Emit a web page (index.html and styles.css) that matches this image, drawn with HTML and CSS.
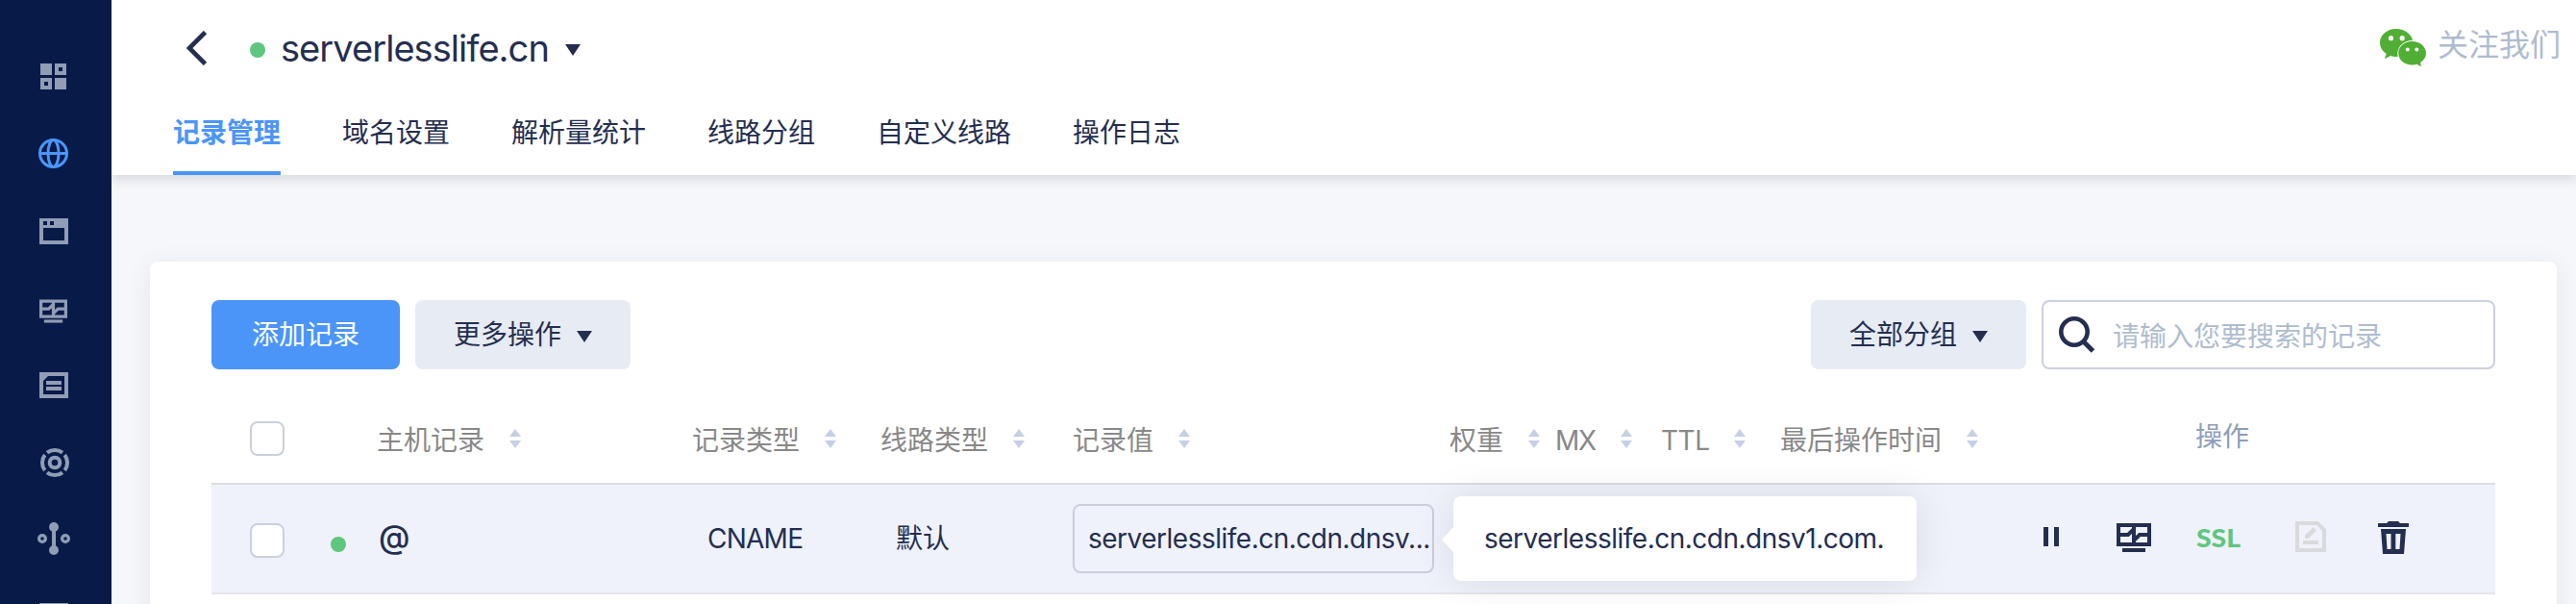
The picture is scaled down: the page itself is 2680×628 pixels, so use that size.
FILE: index.html
```html
<!DOCTYPE html>
<html lang="zh-CN">
<head>
<meta charset="utf-8">
<title>serverlesslife.cn</title>
<link rel="stylesheet" href="styles.css">
</head>
<body>
<svg class="defs" width="0" height="0">
  <symbol id="monitor" viewBox="0 0 36 30">
    <path d="M2 2H34V22H2Z M2 12H12L18 6V18L24 12H34 M18 2V22" fill="none" stroke="currentColor" stroke-width="4"/>
    <path d="M6 26H30V30H6Z" fill="currentColor"/>
  </symbol>
  <symbol id="sort" viewBox="0 0 12 20">
    <path d="M6 0L12 8H0Z M0 12H12L6 20Z" fill="#c5d0e6"/>
  </symbol>
  <symbol id="caret" viewBox="0 0 16 12">
    <path d="M0 0H16L8 12Z" fill="#242e50"/>
  </symbol>
</svg>
<div class="app">
  <nav class="sidebar">
    <a class="nav-item"><svg viewBox="0 0 40 40"><path fill="currentColor" fill-rule="evenodd" d="M4 6H16V18H4Z M19 6H31V18H19Z M23 10V14H27V10Z M4 21H16V33H4Z M8 25V29H12V25Z M19 21H31V33H19Z"/></svg></a>
    <a class="nav-item active"><svg viewBox="0 0 40 40" fill="none" stroke="currentColor" stroke-width="3"><circle cx="17.500" cy="19.500" r="14"/><ellipse cx="17.500" cy="19.500" rx="5.500" ry="14"/><path d="M3.500 19.500H31.500"/></svg></a>
    <a class="nav-item"><svg viewBox="0 0 40 40"><path fill="currentColor" fill-rule="evenodd" d="M3 7H33V34H3Z M7 10V14H11V10Z M14 10V14H18V10Z M7 17V30H29V17Z"/></svg></a>
    <a class="nav-item"><svg viewBox="0 0 40 40"><use href="#monitor" x="3" y="11" width="29" height="25"/></svg></a>
    <a class="nav-item"><svg viewBox="0 0 40 40"><path fill="currentColor" fill-rule="evenodd" d="M3 7H33V34H3Z M12 11L7 16V30H29V11Z M10 16H26V20H10Z M10 22H26V26H10Z"/></svg></a>
    <a class="nav-item"><svg viewBox="0 0 40 40" fill="none" stroke="currentColor" stroke-width="4"><circle cx="19" cy="21" r="5.300"/><path d="M11 10.700A13 13 0 0 1 27 10.700 M29.300 13A13 13 0 0 1 29.300 29 M27 31.300A13 13 0 0 1 11 31.300 M8.700 29A13 13 0 0 1 8.700 13"/></svg></a>
    <a class="nav-item"><svg viewBox="0 0 40 40"><path d="M18 8V32" stroke="currentColor" stroke-width="4"/><circle cx="18" cy="8" r="5" fill="currentColor"/><circle cx="18" cy="32" r="5" fill="currentColor"/><g fill="none" stroke="currentColor" stroke-width="3.200"><circle cx="6" cy="20" r="3.400"/><circle cx="30" cy="20" r="3.400"/></g></svg></a>
    <a class="nav-item"><svg viewBox="0 0 40 40"><path fill="currentColor" d="M3 7H33V34H3Z"/></svg></a>
  </nav>
  <div class="main">
    <header class="header">
      <div class="title-bar">
        <svg class="back" viewBox="0 0 22 36" width="22" height="36"><path d="M19.500 1.500L3 18L19.500 34.500" fill="none" stroke="#242e50" stroke-width="4.600"/></svg>
        <span class="dot"></span>
        <h1 class="domain">serverlesslife.cn</h1>
        <svg class="caret" width="16" height="12"><use href="#caret"/></svg>
        <div class="follow">
          <svg width="48" height="40" viewBox="0 0 48 40">
            <path fill="#4fae33" d="M17 0C7.500 0 0 6.300 0 14.200C0 19 2.500 23 6.700 25.800L5 31.200L11 28C13 28.600 15 29 18.500 29C17 19 24 12 34 12C32.500 5 25.500 0 17 0Z"/>
            <path fill="#4fae33" d="M33.500 13C25.500 13 19.200 18.500 19.200 25.200C19.200 32 25.500 37.500 33.500 37.500C35.500 37.500 37 37.200 38.500 36.700L43 39.200L42 35C45.700 32.700 48 29.200 48 25.200C48 18.500 41.500 13 33.500 13Z"/>
            <circle cx="11.500" cy="9.700" r="2.600" fill="#fff"/><circle cx="23.200" cy="9.700" r="2.600" fill="#fff"/><circle cx="28.800" cy="21.500" r="2" fill="#fff"/><circle cx="38.300" cy="21.500" r="2" fill="#fff"/>
          </svg>
          <span>关注我们</span>
        </div>
      </div>
      <div class="tabs">
        <a class="tab selected">记录管理</a>
        <a class="tab">域名设置</a>
        <a class="tab">解析量统计</a>
        <a class="tab">线路分组</a>
        <a class="tab">自定义线路</a>
        <a class="tab">操作日志</a>
      </div>
    </header>
    <section class="card">
      <div class="toolbar">
        <button class="btn primary">添加记录</button>
        <button class="btn">更多操作<svg width="16" height="12"><use href="#caret"/></svg></button>
        <button class="btn group">全部分组<svg width="16" height="12"><use href="#caret"/></svg></button>
        <div class="search">
          <svg width="38" height="38" viewBox="0 0 38 38" fill="none" stroke="#242e50"><circle cx="16" cy="16" r="13.700" stroke-width="4.600"/><path d="M25.500 26L35.500 36" stroke-width="5"/></svg>
          <span>请输入您要搜索的记录</span>
        </div>
      </div>
      <div class="row head">
        <div class="check"><span class="box"></span></div>
        <div class="cell">主机记录<svg><use href="#sort"/></svg></div>
        <div class="cell">记录类型<svg><use href="#sort"/></svg></div>
        <div class="cell">线路类型<svg><use href="#sort"/></svg></div>
        <div class="cell">记录值<svg><use href="#sort"/></svg></div>
        <div class="cell">权重<svg><use href="#sort"/></svg></div>
        <div class="cell mx">MX<svg><use href="#sort"/></svg></div>
        <div class="cell ttl">TTL<svg><use href="#sort"/></svg></div>
        <div class="cell">最后操作时间<svg><use href="#sort"/></svg></div>
        <div class="cell ops-title">操作</div>
      </div>
      <div class="row body">
        <div class="check"><span class="box"></span><span class="dot"></span></div>
        <div class="cell host">@</div>
        <div class="cell inset cname">CNAME</div>
        <div class="cell inset">默认</div>
        <div class="cell value">
          <div class="value-box">serverlesslife.cn.cdn.dnsv...</div>
          <div class="tooltip">serverlesslife.cn.cdn.dnsv1.com.</div>
        </div>
        <div class="ops">
          <svg width="16" height="20" viewBox="0 0 16 20"><path d="M0 0H5V20H0Z M11 0H16V20H11Z" fill="#242e50"/></svg>
          <svg class="op-monitor" width="36" height="30"><use href="#monitor"/></svg>
          <span class="ssl">SSL</span>
          <svg width="32" height="32" viewBox="0 0 32 32"><path d="M2 2H23L30 9V30H2Z" fill="none" stroke="#d9dadb" stroke-width="4"/><path d="M8 20H24V24H8Z M10 18V14.500L18.500 6.500L22 9.500L13.500 18Z" fill="#d9dadb"/></svg>
          <svg class="op-trash" width="32" height="34" viewBox="0 0 32 34"><path fill="#242e50" fill-rule="evenodd" d="M9 2L11 0H21L23 2H32V6H0V2Z M3 8H29L27 34H5Z M8.500 13L9.500 29H13.500V13Z M18.300 13V29H22.500L23.500 13Z"/></svg>
        </div>
      </div>
    </section>
  </div>
</div>
</body>
</html>
```
FILE: styles.css
```css
* { box-sizing: border-box; }
body {
  margin: 0;
  height: 628px;
  overflow: hidden;
  background: #f6f7fa;
  color: #242e50;
  font: 28px/40px Inter, "Noto Sans CJK SC", sans-serif;
}
svg { display: block; flex: none; }
.defs { position: absolute; }
.app { display: flex; height: 628px; overflow: hidden; }

.sidebar { width: 116px; flex: none; padding-top: 40px; background: #071a48; color: #909db5; }
.nav-item { display: block; height: 80px; padding: 20px 0 0 38px; }
.nav-item svg { width: 40px; height: 40px; }
.nav-item.active { color: #4b95f8; }

.main { flex: 1; min-width: 0; }
.header { height: 182px; background: #fff; box-shadow: 0 4px 12px rgba(30, 50, 90, .16); clip-path: inset(0 0 -40px 0); }
.title-bar { display: flex; align-items: center; height: 100px; padding: 0 16px 0 78px; }
.title-bar > .dot { margin: 4px 16px 0 44px; }
.dot { width: 16px; height: 16px; flex: none; border-radius: 50%; background: #5ec67f; }
.domain { margin: 0; width: 280px; white-space: nowrap; font-size: 38px; font-weight: 400; line-height: 48px; letter-spacing: -.94px; }
.caret { margin: 4px 0 0 16px; }
.follow { display: flex; align-items: center; gap: 12px; margin: -2px 0 0 auto; color: #afbccf; font-size: 32px; }
.follow svg { margin-top: 2px; }
.follow span { padding-bottom: 5px; }
.tabs { display: flex; gap: 64px; height: 82px; padding: 0 64px; }
.tab { height: 82px; padding-top: 18px; white-space: nowrap; }
.tab.selected { color: #4b95f8; font-weight: 700; border-bottom: 4px solid #4b95f8; }

.card {
  height: 400px;
  margin: 90px 20px 0 40px;
  padding: 40px 64px 0;
  border-radius: 8px;
  background: #fff;
  box-shadow: 0 4px 24px rgba(60, 80, 150, .1);
}
.toolbar { display: flex; height: 72px; }
.btn {
  display: flex; align-items: center; justify-content: center; gap: 16px;
  width: 224px; height: 72px; margin-right: 16px; padding: 0;
  border: 0; border-radius: 8px; background: #e7ebf4; color: #242e50; font: inherit;
}
.btn svg { margin-top: 4px; }
.btn.primary { width: 196px; background: #4b95f8; color: #fff; }
.btn.group { margin-left: auto; }
.search {
  display: flex; align-items: center; gap: 18px;
  width: 472px; padding-left: 16px;
  border: 2px solid #cbd0e0; border-radius: 8px; color: #afbccf;
}
.search span { padding-top: 4px; }

.row { display: grid; grid-template-columns: 172px 328px 196px 200px 392px 110px 110px 124px 432px 1fr; align-items: center; }
.head { height: 120px; padding-top: 54px; align-items: start; border-bottom: 2px solid #dcdde0; color: #888; }
.head .cell { display: flex; align-items: center; gap: 26px; white-space: nowrap; }
.head .cell svg { width: 12px; height: 20px; margin-top: -4px; }
.head .mx { letter-spacing: -1.2px; }
.head .ttl { letter-spacing: -.5px; }
.head .ops-title { margin-top: -4px; color: #8e9dbb; }
.check { display: flex; padding-left: 40px; }
.check .box { width: 36px; height: 36px; flex: none; border: 2px solid #cbd0dd; border-radius: 8px; background: #fff; }
.check .dot { margin: 14px 0 0 48px; }
.body { height: 114px; background: #eff2fa; border-bottom: 2px solid #e4e6ec; }
.body .check { padding-top: 4px; }
.inset { padding-left: 16px; }
.host { padding: 0 0 4px 2px; font-size: 33px; font-weight: 500; }
.cname { letter-spacing: -.75px; }
.value { position: relative; height: 72px; width: 376px; }
.value-box { height: 72px; padding: 14px 0 0 14px; border: 2px solid #cbcfdb; border-radius: 8px; white-space: nowrap; letter-spacing: -.5px; }
.tooltip {
  position: absolute; left: 396px; top: -8px; width: 482px; height: 88px;
  padding: 24px 32px; border-radius: 8px; background: #fff; white-space: nowrap; letter-spacing: -.5px;
  box-shadow: 0 0 40px rgba(0, 0, 0, .1);
}
.tooltip::before {
  content: ""; position: absolute; left: -12px; top: 32px;
  border: solid transparent; border-width: 13px 12px 13px 0; border-right-color: #fff;
}
.ops { grid-column: 6 / 11; display: flex; align-items: center; height: 40px; margin-bottom: 4px; padding-left: 618px; }
.ops .op-monitor { margin: 2px 48px 0 60px; }
.ssl { width: 46px; margin: 2px 56px 0 0; color: #5ec67f; font: 900 26px/40px Lato, sans-serif; transform: scaleX(1.09); transform-origin: 12px 50%; }
.ops .op-trash { margin: 2px 0 0 54px; }
```
